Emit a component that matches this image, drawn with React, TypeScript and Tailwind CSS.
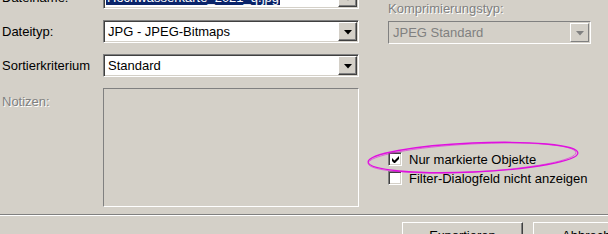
import type { ReactNode } from "react";

const raised =
  "border border-t-white border-l-white border-r-[#404040] border-b-[#404040] shadow-[inset_-1px_-1px_0_#808080]";
const sunken =
  "border border-t-[#808080] border-l-[#808080] border-r-white border-b-white shadow-[inset_1px_1px_0_#404040,inset_-1px_-1px_0_#d4d0c8]";
const etched = "text-[#808080] [text-shadow:1px_1px_0_#fff]";

function Arrow({ disabled }: { disabled?: boolean }) {
  return (
    <div
      className={`flex w-[19px] shrink-0 items-center justify-center bg-[#d4d0c8] ${
        disabled
          ? "border border-t-white border-l-white border-r-[#808080] border-b-[#808080]"
          : raised
      }`}
    >
      <svg width="8" height="5" viewBox="0 0 8 5" className="mt-[1px]">
        <path d="M0 0h8L4 4.5z" fill={disabled ? "#808080" : "#000"} />
      </svg>
    </div>
  );
}

function Combo({
  children,
  disabled,
  className = "",
}: {
  children: ReactNode;
  disabled?: boolean;
  className?: string;
}) {
  return (
    <div
      className={`flex h-[23px] items-stretch p-[1px] ${
        disabled
          ? "border border-t-[#808080] border-l-[#808080] border-r-white border-b-white bg-[#d4d0c8]"
          : `${sunken} bg-white`
      } ${className}`}
    >
      <div
        className={`flex min-w-0 flex-1 items-center overflow-hidden whitespace-nowrap pl-[3px] ${
          disabled ? "text-[#808080]" : "text-black"
        }`}
      >
        {children}
      </div>
      <Arrow disabled={disabled} />
    </div>
  );
}

function Row({ label, children }: { label: string; children: ReactNode }) {
  return (
    <div className="flex h-[23px] items-center">
      <div className="w-[103px] pl-[2px] text-black">{label}</div>
      <div className="w-[256px]">{children}</div>
    </div>
  );
}

function Check({ checked, label }: { checked?: boolean; label: string }) {
  return (
    <div className="flex h-[14px] items-center gap-[7px]">
      <div
        className={`flex h-[14px] w-[14px] shrink-0 items-center justify-center bg-white ${sunken}`}
      >
        {checked && (
          <svg width="7" height="7" viewBox="0 0 7 7">
            <path d="M0 2v3l2 2h1l4-4V0L2.5 4.5z" fill="#000" />
          </svg>
        )}
      </div>
      <span className="whitespace-nowrap text-black">{label}</span>
    </div>
  );
}

export default function App() {
  return (
    <div className="relative h-[234px] w-[608px] overflow-hidden bg-[#d4d0c8] font-['Liberation_Sans',Arial,sans-serif] text-[13px] leading-[15px]">
      <div className="flex items-start">
        <div className="mt-[-14px] flex flex-col gap-[11px]">
          <Row label="Dateiname:">
            <Combo>
              <span className="-ml-[2px] bg-[#0a246a] pl-[1px] pr-[1px] text-white">
                Hochwasserkarte_2021_q.jpg
              </span>
            </Combo>
          </Row>
          <Row label="Dateityp:">
            <Combo>JPG - JPEG-Bitmaps</Combo>
          </Row>
          <Row label="Sortierkriterium">
            <Combo>Standard</Combo>
          </Row>
          <div className="flex h-[119px]">
            <div className={`w-[103px] pl-[2px] pt-[6px] ${etched}`}>Notizen:</div>
            <div className="w-[256px] border border-t-[#808080] border-l-[#808080] border-r-white border-b-white bg-[#d4d0c8]" />
          </div>
        </div>

        <div className="ml-[29px] flex w-[203px] flex-col">
          <div className={`h-[21px] pt-[1px] ${etched}`}>Komprimierungstyp:</div>
          <Combo disabled className="h-[22px]">
            JPEG Standard
          </Combo>
          <div className="mt-[108px] flex flex-col gap-[5px]">
            <Check checked label="Nur markierte Objekte" />
            <Check label="Filter-Dialogfeld nicht anzeigen" />
          </div>
        </div>
      </div>

      <div className="mt-[7px] h-[2px] border-t border-t-[#808080] border-b border-b-white" />

      <div className="ml-[402px] mt-[6px] flex gap-[10px]">
        <div className={`flex h-[23px] w-[121px] shrink-0 justify-center bg-[#d4d0c8] pt-[5px] text-black ${raised}`}>
          Exportieren
        </div>
        <div className={`flex h-[23px] w-[121px] shrink-0 justify-center bg-[#d4d0c8] pt-[5px] text-black ${raised}`}>
          Abbrechen
        </div>
      </div>

      <svg
        className="pointer-events-none absolute left-[362px] top-[138px]"
        width="222"
        height="40"
        viewBox="0 0 222 40"
      >
        <ellipse
          cx="111"
          cy="19.5"
          rx="105"
          ry="14.5"
          transform="rotate(-2.5 111 19.5)"
          fill="none"
          stroke="#e010e0"
          strokeWidth="1.3"
        />
        <ellipse
          cx="110"
          cy="20"
          rx="104"
          ry="14"
          transform="rotate(-3 110 20)"
          fill="none"
          stroke="#e010e0"
          strokeWidth="0.8"
          opacity="0.7"
        />
      </svg>
    </div>
  );
}
